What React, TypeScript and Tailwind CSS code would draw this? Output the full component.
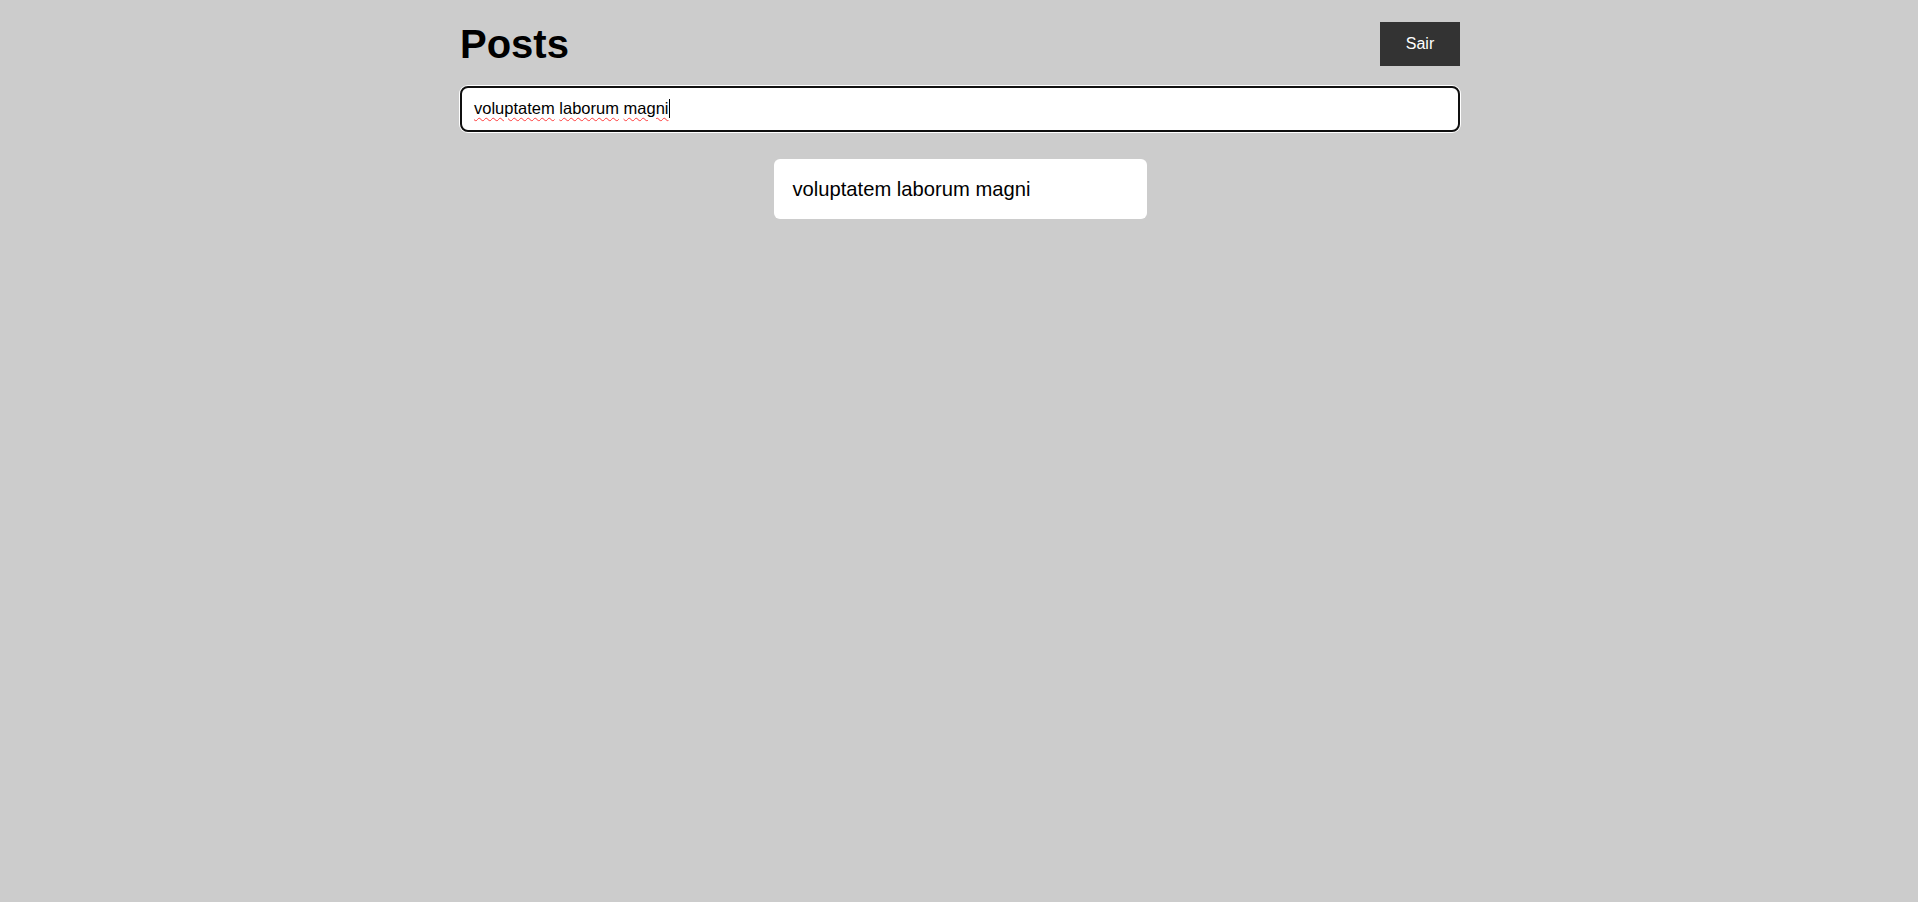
import React from "react";

const App = () => {
  const query = "voluptatem laborum magni";
  const posts = [{ id: 1, title: "voluptatem laborum magni" }];

  return (
    <div className="min-h-screen bg-[#cccccc] font-['Liberation_Sans',Arial,sans-serif] text-black">
      <div className="max-w-[1002px] mx-auto pl-[2px] pt-[22px]">
        <div className="flex items-center justify-between h-[44px]">
          <h1 className="text-[40px] leading-none font-bold">Posts</h1>
          <button className="w-[80px] h-[44px] bg-[#333333] text-white text-[16px]">
            Sair
          </button>
        </div>

        {/* search box (rendered focused, with the spellcheck marks) */}
        <div
          role="textbox"
          className="mt-[20px] h-[46px] flex items-center pl-[12px] pr-[13px] pb-[2px] bg-white border-2 border-[#101010] rounded-lg shadow-[0_0_0_1px_#ffffff] text-[16.5px]"
        >
          {query.split(" ").map((word, i) => (
            <React.Fragment key={i}>
              {i > 0 && <span>&nbsp;</span>}
              <span className="underline decoration-wavy decoration-[#ff3b3b] decoration-1 underline-offset-[3px]">
                {word}
              </span>
            </React.Fragment>
          ))}
          <span className="w-px h-[19px] bg-black ml-[1px]"></span>
        </div>

        <div className="mt-[27px] flex flex-col items-center gap-4">
          {posts.map((post) => (
            <div
              key={post.id}
              className="w-[373px] bg-white rounded-md pl-[19px] pr-[17px] py-[18px] text-[20.2px] leading-[24px]"
            >
              {post.title}
            </div>
          ))}
        </div>
      </div>
    </div>
  );
};

export default App;
